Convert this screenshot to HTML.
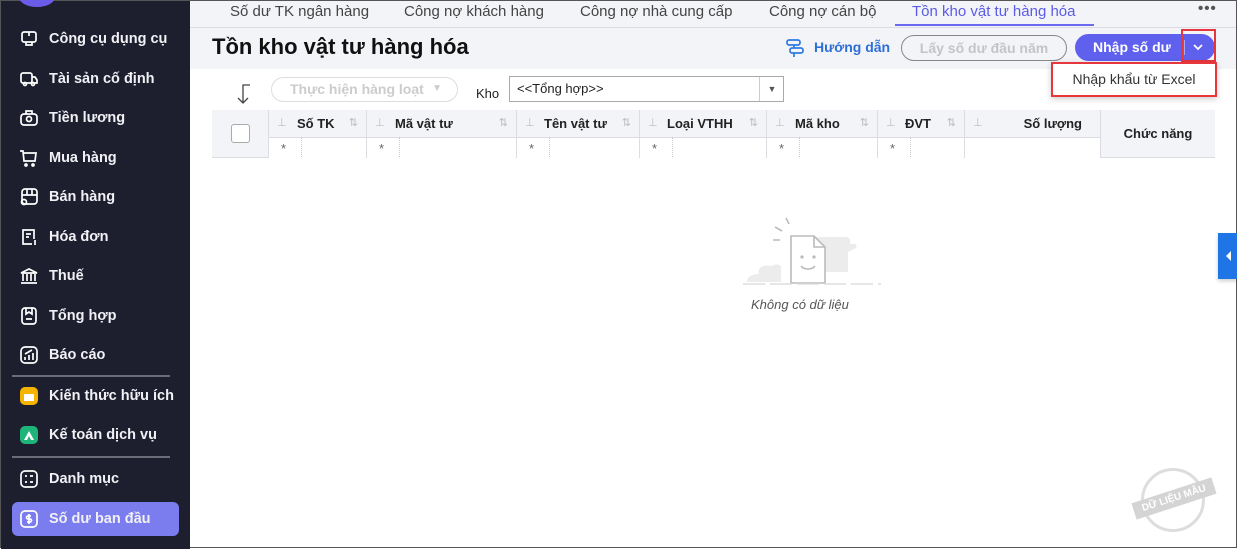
<!DOCTYPE html>
<html><head><meta charset="utf-8"><style>
*{box-sizing:border-box;margin:0;padding:0}
body{width:1237px;height:548px;overflow:hidden;font-family:"Liberation Sans",Arial,sans-serif;background:#fff;position:relative;border:1px solid #555}
.sb{position:absolute;left:0;top:0;width:189px;height:548px;background:#1e1f2e;color:#fff}
.it{position:absolute;left:18px;font-size:14.5px;font-weight:bold;color:#f0f0f5;height:20px;line-height:20px;padding-left:30px}
.it svg{position:absolute;left:0;top:0}
.dv{position:absolute;left:11px;width:158px;height:2px;background:#6b6c78}
.abs{position:absolute}
.tabs{position:absolute;left:189px;top:0;right:0;height:27px;background:#f3f4f8;border-bottom:1px solid #dcdde3}
.tab{position:absolute;top:2px;font-size:15px;color:#444}
.hdr{position:absolute;left:189px;top:27px;right:0;height:41px;background:#f3f4f8}
.col{position:absolute;top:109px;height:27px;border-right:1px solid #dcdde3;font-size:13px;font-weight:bold;color:#222;line-height:27px}
.f{position:absolute;top:136px;height:21px;border-right:1px solid #dcdde3;font-size:13px;color:#666;line-height:24px}
.pin{color:#bbb;font-weight:normal;font-size:11px;position:absolute;left:8px}
.srt{color:#bbb;font-weight:normal;font-size:11px;position:absolute;right:8px}
</style></head><body>
<div class="sb">
<div class="abs" style="left:18px;top:-14px;width:36px;height:20px;border-radius:50%;background:#6a5be8"></div>
<div class="it" style="top:28px"><svg width="20" height="20" viewBox="0 0 20 20" fill="none" stroke="#fff" stroke-width="1.7"><rect x="3" y="3" width="14" height="10" rx="2"/><path d="M7 13v3h6v-3M10 3v4"/></svg>Công cụ dụng cụ</div>
<div class="it" style="top:68px"><svg width="20" height="20" viewBox="0 0 20 20" fill="none" stroke="#fff" stroke-width="1.7"><rect x="2" y="4" width="11" height="10" rx="2"/><path d="M13 8h3l2 3v3h-5"/><circle cx="6" cy="15" r="1.5"/><circle cx="14" cy="15" r="1.5"/></svg>Tài sản cố định</div>
<div class="it" style="top:107px"><svg width="20" height="20" viewBox="0 0 20 20" fill="none" stroke="#fff" stroke-width="1.7"><rect x="2" y="6" width="16" height="11" rx="3"/><path d="M7 6V3h6v3"/><circle cx="10" cy="11" r="2.5"/></svg>Tiền lương</div>
<div class="it" style="top:147px"><svg width="20" height="20" viewBox="0 0 20 20" fill="none" stroke="#fff" stroke-width="1.7"><path d="M1 3h3l1 10h11l1-8H5"/><circle cx="7" cy="17" r="1"/><circle cx="14" cy="17" r="1"/></svg>Mua hàng</div>
<div class="it" style="top:186px"><svg width="20" height="20" viewBox="0 0 20 20" fill="none" stroke="#fff" stroke-width="1.7"><rect x="3" y="2" width="15" height="15" rx="3"/><path d="M3 8h15M8 2v6M13 2v6"/><circle cx="5" cy="15" r="2.5"/></svg>Bán hàng</div>
<div class="it" style="top:226px"><svg width="20" height="20" viewBox="0 0 20 20" fill="none" stroke="#fff" stroke-width="1.7"><path d="M13 17H4V3h11v9M7 7h5M7 10h3"/><path d="M16 13v5"/></svg>Hóa đơn</div>
<div class="it" style="top:265px"><svg width="20" height="20" viewBox="0 0 20 20" fill="none" stroke="#fff" stroke-width="1.7"><path d="M2 7l8-4 8 4zM4 8v7M8 8v7M12 8v7M16 8v7M2 17h16"/></svg>Thuế</div>
<div class="it" style="top:305px"><svg width="20" height="20" viewBox="0 0 20 20" fill="none" stroke="#fff" stroke-width="1.7"><rect x="3" y="2" width="14" height="16" rx="3"/><path d="M7 2v6l3-2 3 2V2M7 13h6"/></svg>Tổng hợp</div>
<div class="it" style="top:344px"><svg width="20" height="20" viewBox="0 0 20 20" fill="none" stroke="#fff" stroke-width="1.7"><rect x="2" y="2" width="16" height="16" rx="4"/><path d="M6 15v-3M10 15v-5M14 15V8M6 9l7-4"/></svg>Báo cáo</div>
<div class="dv" style="top:374px"></div>
<div class="it" style="top:385px"><svg width="20" height="20" viewBox="0 0 20 20"><rect x="1" y="1" width="18" height="18" rx="5" fill="#f5b400"/><path d="M5 8h10v7H5z" fill="#fff"/></svg>Kiến thức hữu ích</div>
<div class="it" style="top:424px"><svg width="20" height="20" viewBox="0 0 20 20"><rect x="1" y="1" width="18" height="18" rx="5" fill="#1fb47a"/><path d="M5 15l5-9 5 9h-3l-2-4-2 4z" fill="#fff"/></svg>Kế toán dịch vụ</div>
<div class="dv" style="top:455px;width:158px"></div>
<div class="it" style="top:468px"><svg width="20" height="20" viewBox="0 0 20 20" fill="none" stroke="#fff" stroke-width="1.7"><rect x="2" y="2" width="16" height="16" rx="4"/><path d="M6 7h2M11 7h3M6 13h2M11 13h3"/></svg>Danh mục</div>
<div class="abs" style="left:11px;top:501px;width:167px;height:34px;background:#7b7cee;border-radius:6px"></div>
<div class="it" style="top:508px"><svg width="20" height="20" viewBox="0 0 20 20" fill="none" stroke="#fff" stroke-width="1.7"><rect x="2" y="2" width="16" height="16" rx="4"/><path d="M12 7h-3a1.5 1.5 0 0 0 0 3h2a1.5 1.5 0 0 1 0 3H8M10 5v10"/></svg>Số dư ban đầu</div>
</div>

<div class="tabs">
<div class="tab" style="left:40px">Số dư TK ngân hàng</div>
<div class="tab" style="left:214px">Công nợ khách hàng</div>
<div class="tab" style="left:390px">Công nợ nhà cung cấp</div>
<div class="tab" style="left:579px">Công nợ cán bộ</div>
<div class="tab" style="left:722px;color:#5b5ce6">Tồn kho vật tư hàng hóa</div>
<div class="abs" style="left:705px;top:23px;width:199px;height:2px;background:#6a6bef"></div>
<div class="tab" style="left:1008px;top:-1px;color:#555;font-weight:bold;letter-spacing:1px">•••</div>
</div>
<div class="hdr">
<div class="abs" style="left:22px;top:6px;font-size:22px;font-weight:bold;color:#111">Tồn kho vật tư hàng hóa</div>
<svg class="abs" style="left:595px;top:10px" width="20" height="20" viewBox="0 0 20 20" fill="none" stroke="#2d7be0" stroke-width="1.7"><rect x="2" y="2" width="13" height="5" rx="2"/><rect x="5" y="10" width="13" height="5" rx="2"/><path d="M9 7v3M9 15v4"/></svg>
<div class="abs" style="left:624px;top:11px;font-size:14px;font-weight:bold;color:#2d6fd6">Hướng dẫn</div>
<div class="abs" style="left:711px;top:7px;width:166px;height:26px;border:1px solid #888;border-radius:13px;color:#c4c4c8;font-size:14px;font-weight:bold;text-align:center;line-height:24px">Lấy số dư đầu năm</div>
<div class="abs" style="left:885px;top:6px;width:140px;height:27px;background:#5f60ee;border-radius:14px;color:#fff;font-size:14px;font-weight:bold;line-height:27px;padding-left:18px">Nhập số dư</div>
<div class="abs" style="left:994px;top:12px;width:1px;height:15px;background:#a9aaf6"></div>
<svg class="abs" style="left:1002px;top:14px" width="12" height="10" viewBox="0 0 12 10" fill="none" stroke="#fff" stroke-width="1.8"><path d="M2 3l4 4 4-4"/></svg>
<div class="abs" style="left:991px;top:1px;width:35px;height:33px;border:2px solid #e8373c"></div>
</div>
<svg class="abs" style="left:232px;top:82px" width="20" height="22" viewBox="0 0 20 22" fill="none" stroke="#444" stroke-width="1.3"><path d="M17 2h-7v18M5 15l5 5 5-5"/></svg>
<div class="abs" style="left:270px;top:76px;width:187px;height:25px;border:1.5px solid #ddd;border-radius:13px;color:#ccc;font-size:14px;font-weight:bold;line-height:22px;padding-left:18px">Thực hiện hàng loạt<span style="position:absolute;right:15px;font-size:10px">▼</span></div>
<div class="abs" style="left:475px;top:85px;font-size:13px;color:#222">Kho</div>
<div class="abs" style="left:508px;top:75px;width:275px;height:26px;border:1px solid #aaa;font-size:13px;color:#222;line-height:24px;padding-left:7px">&lt;&lt;Tổng hợp&gt;&gt;<span style="position:absolute;left:249px;top:0;height:24px;border-left:1px solid #ccc;width:25px;text-align:center;font-size:9px;color:#555">▼</span></div>
<div class="abs" style="left:1050px;top:61px;width:166px;height:35px;background:#fff;border:2px solid #e8373c;box-shadow:0 2px 6px rgba(0,0,0,.2);font-size:14px;color:#333;text-align:center;line-height:31px">Nhập khẩu từ Excel</div>
<div class="abs" style="left:211px;top:109px;width:1003px;height:48px;background:#f3f4f8;border-bottom:1px solid #dcdde3"></div>
<div class="abs" style="left:268px;top:136px;width:832px;height:21px;background:#fff;border-top:1px solid #dcdde3"></div>
<div class="abs" style="left:230px;top:123px;width:19px;height:19px;border:1px solid #aaa;border-radius:3px;background:#fff"></div>
<div class="abs" style="left:267px;top:109px;width:1px;height:48px;background:#dcdde3"></div>
<div class="col" style="left:268px;width:98px"><span class="pin">⊥</span><span style="margin-left:28px">Số TK</span><span class="srt">⇅</span></div>
<div class="col" style="left:366px;width:150px"><span class="pin">⊥</span><span style="margin-left:28px">Mã vật tư</span><span class="srt">⇅</span></div>
<div class="col" style="left:516px;width:123px"><span class="pin">⊥</span><span style="margin-left:27px">Tên vật tư</span><span class="srt">⇅</span></div>
<div class="col" style="left:639px;width:127px"><span class="pin">⊥</span><span style="margin-left:27px">Loại VTHH</span><span class="srt">⇅</span></div>
<div class="col" style="left:766px;width:111px"><span class="pin">⊥</span><span style="margin-left:28px">Mã kho</span><span class="srt">⇅</span></div>
<div class="col" style="left:877px;width:87px"><span class="pin">⊥</span><span style="margin-left:27px">ĐVT</span><span class="srt">⇅</span></div>
<div class="col" style="left:964px;width:136px;text-align:right;padding-right:18px"><span class="pin">⊥</span>Số lượng</div>
<div class="abs" style="left:1100px;top:109px;width:114px;height:48px;font-size:13px;font-weight:bold;color:#222;text-align:center;line-height:48px">Chức năng</div>
<div class="f" style="left:268px;width:98px"><span style="margin-left:12px">*</span><span style="position:absolute;left:32px;top:0;height:20px;border-left:1px dotted #ccc"></span></div>
<div class="f" style="left:366px;width:150px"><span style="margin-left:12px">*</span><span style="position:absolute;left:32px;top:0;height:20px;border-left:1px dotted #ccc"></span></div>
<div class="f" style="left:516px;width:123px"><span style="margin-left:12px">*</span><span style="position:absolute;left:32px;top:0;height:20px;border-left:1px dotted #ccc"></span></div>
<div class="f" style="left:639px;width:127px"><span style="margin-left:12px">*</span><span style="position:absolute;left:32px;top:0;height:20px;border-left:1px dotted #ccc"></span></div>
<div class="f" style="left:766px;width:111px"><span style="margin-left:12px">*</span><span style="position:absolute;left:32px;top:0;height:20px;border-left:1px dotted #ccc"></span></div>
<div class="f" style="left:877px;width:87px"><span style="margin-left:12px">*</span><span style="position:absolute;left:32px;top:0;height:20px;border-left:1px dotted #ccc"></span></div>
<div class="f" style="left:964px;width:136px"></div>
<svg class="abs" style="left:730px;top:205px" width="160" height="85" viewBox="0 0 160 85">
<path d="M16 76c0-6 6-8 12-8-2-6 4-10 12-8 4-2 8-2 10 0v16z" fill="#ececec"/>
<path d="M82 31h32c5 0 6 4 5 7h4c4 0 3 4 0 5l-6 3v20H82z" fill="#ececec"/>
<path d="M60 30h23l11 11v36H60z" fill="#fff" stroke="#bbb" stroke-width="1.6"/>
<path d="M83 30v11h11" fill="none" stroke="#bbb" stroke-width="1.6"/>
<circle cx="71" cy="51" r="1.6" fill="#bbb"/><circle cx="83" cy="51" r="1.6" fill="#bbb"/>
<path d="M70 60c3 4 11 4 14 0" fill="none" stroke="#bbb" stroke-width="1.6"/>
<path d="M55 12l3 6M44 21l7 4M42 34h7" stroke="#bbb" stroke-width="1.6"/>
<path d="M12 78h138" stroke="#ddd" stroke-width="1.5" stroke-dasharray="22 5"/>
</svg>
<div class="abs" style="left:750px;top:296px;font-size:13px;font-style:italic;color:#555">Không có dữ liệu</div>
<div class="abs" style="left:1217px;top:232px;width:20px;height:46px;background:#1f74e6;box-shadow:0 2px 4px rgba(0,0,0,.2)"></div>
<div class="abs" style="left:1225px;top:250px;width:0;height:0;border-top:5px solid transparent;border-bottom:5px solid transparent;border-right:5px solid #fff"></div>
<div class="abs" style="left:1140px;top:467px;width:64px;height:64px;border:3px solid #ddd;border-radius:50%"></div>
<div class="abs" style="left:1131px;top:489px;width:84px;height:17px;background:#d4d4d4;color:#fff;font-size:10px;font-weight:bold;text-align:center;line-height:17px;transform:rotate(-18deg)">DỮ LIỆU MẪU</div>
</body></html>
